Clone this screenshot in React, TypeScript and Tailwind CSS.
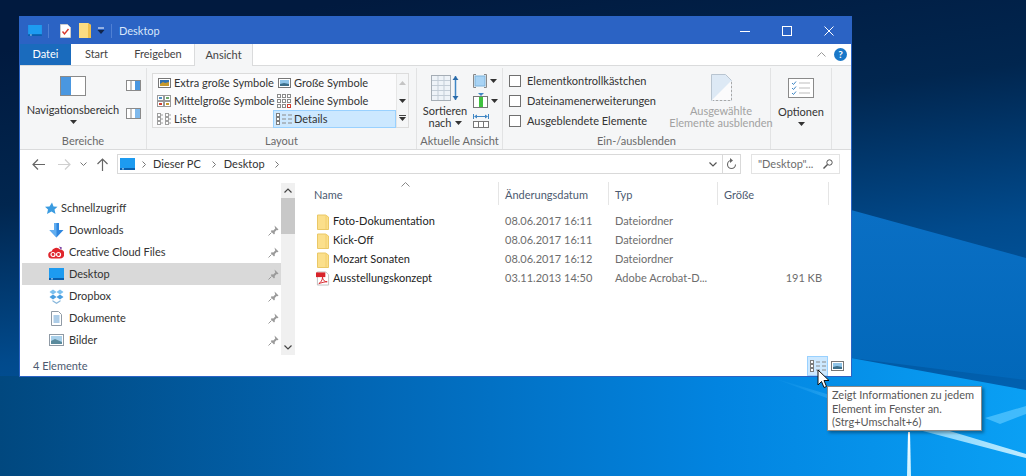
import React from 'react';

const Caret = ({ className = '' }: { className?: string }) => (
  <svg width="7" height="4" viewBox="0 0 7 4" className={className}><path d="M0 0h7L3.5 4z" fill="#333" /></svg>
);

const DesktopIcon = ({ w = 15, h = 12 }: { w?: number; h?: number }) => (
  <svg width={w} height={h} viewBox="0 0 15 12">
    <rect x="0" y="0" width="15" height="11" fill="#1d9bf0" />
    <rect x="0" y="10" width="15" height="2" fill="#0a5fae" />
    <rect x="2" y="10.4" width="2" height="1" fill="#bfe3fb" />
  </svg>
);

const Folder = () => (
  <svg width="12" height="16" viewBox="0 0 12 16">
    <path d="M0.5 1h8l3 2v12.5h-11z" fill="#fbdf8b" stroke="#eac867" />
    <path d="M9 1v14" stroke="#f2cf6f" strokeWidth="1" />
  </svg>
);

const PdfIcon = () => (
  <svg width="15" height="15" viewBox="0 0 15 15">
    <path d="M1.5 0.5h9l3 3v11h-12z" fill="#fff" stroke="#bdbdbd" />
    <rect x="0" y="1" width="10" height="5" fill="#d8232a" />
    <path d="M3 13c2-1 4-4 4-7 0 3 2 5 5 5-3 0-6 1-9 2z" fill="none" stroke="#d8232a" strokeWidth="1" />
  </svg>
);

const Pin = () => (
  <svg width="11" height="11" viewBox="0 0 11 11">
    <path d="M6.5 0.5l4 4-1 .7-.8-.3-2 2 .2 1.7-.9.8L2.8 6.2l.8-.9 1.7.2 2-2-.3-.8z" fill="#9a9a9a" />
    <path d="M3.5 7.5L0.5 10.5" stroke="#9a9a9a" />
  </svg>
);

const NavIcon = ({ name }: { name: string }) => {
  if (name === 'Downloads')
    return (
      <svg width="15" height="15" viewBox="0 0 15 15">
        <path d="M5 0h5v7h4.500L7.500 14.500 0.500 7H5z" fill="#2f86de" />
        <path d="M5 0h2.500v14.500L0.500 7H5z" fill="#62aef0" />
      </svg>
    );
  if (name === 'Creative Cloud Files')
    return (
      <svg width="16" height="13" viewBox="0 0 16 13">
        <path d="M4 12.500a3.500 3.500 0 0 1-.5-7A5 5 0 0 1 12 3.500a4.500 4.500 0 0 1 0 9z" fill="#e0262c" />
        <circle cx="5" cy="8.500" r="2" fill="none" stroke="#fff" strokeWidth="1.200" />
        <circle cx="10.500" cy="8.500" r="2" fill="none" stroke="#fff" strokeWidth="1.200" />
        <path d="M11 0.500l3 1-1 2.500z" fill="#7a3fa0" />
      </svg>
    );
  if (name === 'Desktop') return <DesktopIcon />;
  if (name === 'Dropbox')
    return (
      <svg width="15" height="15" viewBox="0 0 15 15">
        <path d="M4 0.500l3.500 2.500L4 5.500 0.500 3zM11 0.500L14.500 3 11 5.500 7.500 3z" fill="#7cc0ee" />
        <path d="M4 5.500L7.500 8 4 10.500 0.500 8zM11 5.500L14.500 8 11 10.500 7.500 8z" fill="#4a9fe0" />
        <path d="M3.500 11l4 2.500 4-2.500v1.500l-4 2.500-4-2.500z" fill="#8ab8dc" />
      </svg>
    );
  if (name === 'Dokumente')
    return (
      <svg width="11" height="15" viewBox="0 0 11 15">
        <path d="M0.500 0.500h7l3 3v11h-10z" fill="#fff" stroke="#8f9aa5" />
        <path d="M2.500 5h6M2.500 7h6M2.500 9h6M2.500 11h6" stroke="#5b9ad0" />
      </svg>
    );
  return (
    <svg width="15" height="12" viewBox="0 0 15 12">
      <rect x="0.500" y="0.500" width="14" height="11" fill="#fff" stroke="#8f9aa5" />
      <rect x="2" y="2" width="11" height="8" fill="#a9d0ea" />
      <path d="M2 10V7l4-2 7 3v2z" fill="#5a8a9c" />
    </svg>
  );
};

const GalleryIcon = ({ kind }: { kind: string }) => {
  if (kind === 'xl')
    return (
      <svg width="13" height="10" viewBox="0 0 13 10">
        <rect x="0.500" y="0.500" width="12" height="9" fill="#fff" stroke="#777" />
        <rect x="2" y="2" width="9" height="6" fill="#2f6fb0" />
        <path d="M2 8V6l3-2 2 1 4-1v4z" fill="#c79a2c" />
      </svg>
    );
  if (kind === 'l')
    return (
      <svg width="13" height="10" viewBox="0 0 13 10">
        <rect x="0.500" y="0.500" width="12" height="9" fill="#fff" stroke="#777" />
        <rect x="2" y="2" width="9" height="6" fill="#8fc4e8" />
        <path d="M2 8V6l4-1 5 1v2z" fill="#3d6f8a" />
      </svg>
    );
  if (kind === 'm')
    return (
      <svg width="14" height="12" viewBox="0 0 14 12">
        <rect x="0.500" y="0.500" width="6" height="5" fill="#fff" stroke="#999" />
        <rect x="7.500" y="0.500" width="6" height="5" fill="#fff" stroke="#999" />
        <rect x="0.500" y="6.500" width="6" height="5" fill="#fff" stroke="#999" />
        <rect x="7.500" y="6.500" width="6" height="5" fill="#fff" stroke="#999" />
        <rect x="2" y="2" width="3" height="2" fill="#4d8ec4" />
        <rect x="9" y="2" width="3" height="2" fill="#6fa86a" />
        <rect x="2" y="8" width="3" height="2" fill="#d04030" />
        <rect x="9" y="8" width="3" height="2" fill="#c79a2c" />
      </svg>
    );
  if (kind === 's')
    return (
      <svg width="14" height="14" viewBox="0 0 14 14">
        {[0, 5, 10].flatMap((y) =>
          [0, 5, 10].map((x) => (
            <rect key={`${x}-${y}`} x={x + 0.5} y={y + 0.5} width="3" height="3" fill="#fff" stroke={y === 10 && x === 10 ? '#d04030' : '#8a8a8a'} />
          )),
        )}
      </svg>
    );
  if (kind === 'list')
    return (
      <svg width="14" height="12" viewBox="0 0 14 12">
        {[0, 4, 8].flatMap((y) =>
          [0, 8].map((x) => (
            <g key={`${x}-${y}`}>
              <rect x={x + 0.5} y={y + 0.5} width="3" height="3" fill="#fff" stroke="#a0a0a0" />
              <path d={`M${x + 4} ${y + 2}h2`} stroke="#a0a0a0" />
            </g>
          )),
        )}
      </svg>
    );
  return <DetailsIcon />;
};

const DetailsIcon = () => (
  <svg width="16" height="12" viewBox="0 0 16 12">
    {[0, 4, 8].map((y) => (
      <g key={y}>
        <rect x="0.500" y={y + 0.5} width="3" height="3" fill="#fff" stroke="#7d7d7d" />
        <path d={`M6 ${y + 2}h4M12 ${y + 2}h4`} stroke="#8a8a8a" />
      </g>
    ))}
  </svg>
);

const PaneIcon = ({ side }: { side: 'left' | 'right' | 'rightDark' }) => (
  <svg width="15" height="11" viewBox="0 0 15 11">
    <rect x="0.500" y="0.500" width="14" height="10" fill="#fff" stroke="#8a8a8a" />
    {side === 'left' && <rect x="1" y="1" width="6" height="9" fill="#4a97e0" />}
    {side === 'right' && <rect x="9" y="1" width="5" height="9" fill="#4a97e0" />}
    {side === 'rightDark' && <rect x="9" y="1" width="5" height="9" fill="#7fb9ec" />}
    <path d="M5 1v9" stroke="#8a8a8a" />
  </svg>
);

const RibbonGroup = ({ label, className, children }: { label: string; className: string; children: React.ReactNode }) => (
  <div className={`flex flex-col border-r border-[#e2e3e4] ${className}`}>
    <div className="flex-1 min-h-0 flex">{children}</div>
    <div className="h-[15px] mb-[1px] leading-[15px] text-center text-[#6a6a6a] whitespace-nowrap">{label}</div>
  </div>
);

const GalleryItem = ({ kind, label, active }: { kind: string; label: string; active?: boolean }) => (
  <div className={`h-[18px] flex items-center border ${active ? 'bg-[#cce8ff] border-[#99d1ff]' : 'border-transparent'}`}>
    <span className="w-[20px] flex justify-center shrink-0"><GalleryIcon kind={kind} /></span>
    <span className="whitespace-nowrap text-[#333]">{label}</span>
  </div>
);

const Check = ({ label }: { label: string }) => (
  <div className="h-[20px] flex items-center gap-[6px]">
    <span className="w-[12px] h-[12px] border border-[#707070] bg-white shrink-0" />
    <span className="whitespace-nowrap text-[#333]">{label}</span>
  </div>
);

const navItems = ['Downloads', 'Creative Cloud Files', 'Desktop', 'Dropbox', 'Dokumente', 'Bilder'];

const files = [
  { name: 'Foto-Dokumentation', date: '08.06.2017 16:11', type: 'Dateiordner', size: '' },
  { name: 'Kick-Off', date: '08.06.2017 16:11', type: 'Dateiordner', size: '' },
  { name: 'Mozart Sonaten', date: '08.06.2017 16:12', type: 'Dateiordner', size: '' },
  { name: 'Ausstellungskonzept', date: '03.11.2013 14:50', type: 'Adobe Acrobat-D...', size: '191 KB' },
];

const columns = ['Name', 'Änderungsdatum', 'Typ', 'Größe'];

export default function App() {
  return (
    <div className="relative w-[1026px] h-[476px] overflow-hidden pt-[16px] pl-[19px] text-[11px] font-['Lato',sans-serif] bg-[#012a5c]">
      {/* Wallpaper */}
      <svg className="absolute inset-0" width="1026" height="476" viewBox="0 0 1026 476">
        <defs>
          <linearGradient id="sky" x1="0.350" y1="0" x2="0.650" y2="1">
            <stop offset="0" stopColor="#011a3f" />
            <stop offset="0.300" stopColor="#01264f" />
            <stop offset="0.600" stopColor="#014a8c" />
            <stop offset="1" stopColor="#0166b8" />
          </linearGradient>
          <linearGradient id="floor" x1="0" y1="0" x2="1" y2="0">
            <stop offset="0" stopColor="#01487f" />
            <stop offset="0.350" stopColor="#0266b4" />
            <stop offset="0.700" stopColor="#0284e0" />
            <stop offset="1" stopColor="#0aa0f4" />
          </linearGradient>
          <linearGradient id="band" x1="0" y1="0" x2="0" y2="1">
            <stop offset="0" stopColor="#0a6fc4" />
            <stop offset="1" stopColor="#0268ba" />
          </linearGradient>
          <linearGradient id="streak" x1="0" y1="0" x2="1" y2="0">
            <stop offset="0" stopColor="#4cc0ff" stopOpacity="0" />
            <stop offset="0.700" stopColor="#9fe0ff" stopOpacity="0.900" />
            <stop offset="1" stopColor="#c0ecff" />
          </linearGradient>
          <linearGradient id="beam" x1="0" y1="0" x2="0" y2="1">
            <stop offset="0" stopColor="#ffffff" />
            <stop offset="1" stopColor="#c8f0ff" />
          </linearGradient>
        </defs>
        <rect width="1026" height="476" fill="url(#sky)" />
        <path d="M851 210L1026 258V380L851 358z" fill="url(#band)" />
        <path d="M0 476V376H851V358L1026 390V476z" fill="url(#floor)" />
        <path d="M770 377L1026 454V458L900 425z" fill="url(#streak)" />
        <path d="M985 418L1026 406V414L1000 424z" fill="#5ac8ff" opacity="0.700" />
        <path d="M907 476L908 432L910 432L911 476z" fill="url(#beam)" />
      </svg>

      {/* Window */}
      <div className="relative w-[833px] h-[361px] flex flex-col border border-[#2b63c4] bg-white">
        {/* Title bar */}
        <div className="h-[27px] shrink-0 bg-[#2b63c4] flex items-center text-[#d8e6fa]">
          <span className="ml-[8px] flex"><DesktopIcon w={14} h={11} /></span>
          <span className="ml-[6px] w-[1px] h-[14px] bg-[#4f80d4]" />
          <svg className="ml-[11px]" width="11" height="14" viewBox="0 0 11 14">
            <path d="M0.500 0.500h7l3 3v10h-10z" fill="#fff" stroke="#ccc" />
            <path d="M2.500 7.500l2 2.500 4-5" fill="none" stroke="#d8352a" strokeWidth="1.400" />
          </svg>
          <svg className="ml-[8px]" width="12" height="15" viewBox="0 0 12 15">
            <path d="M0 0h9l3 2v13H0z" fill="#fbdc82" />
            <path d="M9 0v15h3V2z" fill="#eebf4e" />
          </svg>
          <svg className="ml-[6px]" width="8" height="8" viewBox="0 0 8 8">
            <path d="M1 1h6" stroke="#fff" />
            <path d="M0.500 3h7L4 7z" fill="#10244a" />
          </svg>
          <span className="ml-[6px] w-[1px] h-[14px] bg-[#4f80d4]" />
          <span className="ml-[7px] text-[11px] leading-none">Desktop</span>
          <div className="ml-auto flex items-center pr-[1px]">
            {/* minimize */}
            <span className="w-[42px] flex justify-center">
              <svg width="10" height="10" viewBox="0 0 10 10"><path d="M0 5.500h10" stroke="#fff" /></svg>
            </span>
            <span className="w-[42px] flex justify-center">
              <svg width="10" height="10" viewBox="0 0 10 10"><rect x="0.500" y="0.500" width="9" height="9" fill="none" stroke="#fff" /></svg>
            </span>
            <span className="w-[42px] flex justify-center">
              <svg width="10" height="10" viewBox="0 0 10 10"><path d="M0.500 0.500l9 9M9.500 0.500l-9 9" stroke="#fff" /></svg>
            </span>
          </div>
        </div>

        {/* Tabs */}
        <div className="h-[22px] shrink-0 flex items-stretch border-b border-[#dadbdc] text-[#444]">
          <div className="w-[51px] bg-[#1a6bbd] text-white flex items-center justify-center">Datei</div>
          <div className="w-[51px] flex items-center justify-center">Start</div>
          <div className="w-[72px] flex items-center justify-center">Freigeben</div>
          <div className="w-[59px] -mb-[1px] z-10 bg-[#f5f6f7] border-x border-[#dadbdc] flex items-center justify-center">Ansicht</div>
          <div className="ml-auto flex items-center gap-[8px] pr-[4px]">
            <svg width="9" height="5" viewBox="0 0 9 5"><path d="M0.500 4.500l4-4 4 4" fill="none" stroke="#9a9a9a" /></svg>
            <span className="w-[13px] h-[13px] rounded-full bg-[#1a78c8] text-white text-[10px] font-bold leading-[13px] text-center">?</span>
          </div>
        </div>

        {/* Ribbon */}
        <div className="h-[84px] shrink-0 flex bg-[#f5f6f7] border-b border-[#dadbdc] pt-[2px] text-[#444]">
          <RibbonGroup label="Bereiche" className="w-[127px]">
            <div className="w-[106px] flex flex-col items-center pt-[8px]">
              <svg width="26" height="20" viewBox="0 0 26 20">
                <rect x="0.500" y="0.500" width="25" height="19" fill="#fff" stroke="#8a8a8a" />
                <rect x="1" y="1" width="10" height="18" fill="#4a97e0" />
              </svg>
              <span className="mt-[7px] leading-[14px] text-[#333] whitespace-nowrap">Navigationsbereich</span>
              <Caret className="mt-[3px]" />
            </div>
            <div className="flex flex-col pt-[12px] gap-[17px]">
              <PaneIcon side="right" />
              <PaneIcon side="rightDark" />
            </div>
          </RibbonGroup>

          <RibbonGroup label="Layout" className="w-[270px]">
            <div className="ml-[5px] mt-[5px] w-[257px] h-[55px] flex border border-[#dcdcdc] bg-[#fbfbfc]">
              <div className="w-[243px] grid grid-cols-[120px_123px] pt-[0px]">
                <GalleryItem kind="xl" label="Extra große Symbole" />
                <GalleryItem kind="l" label="Große Symbole" />
                <GalleryItem kind="m" label="Mittelgroße Symbole" />
                <GalleryItem kind="s" label="Kleine Symbole" />
                <GalleryItem kind="list" label="Liste" />
                <GalleryItem kind="details" label="Details" active />
              </div>
              <div className="flex-1 flex flex-col items-center bg-[#f5f6f7] border-l border-[#e6e6e6]">
                <span className="h-[18px] flex items-center"><svg width="7" height="4" viewBox="0 0 7 4"><path d="M0 4h7L3.500 0z" fill="#c4c4c4" /></svg></span>
                <span className="h-[18px] flex items-center"><Caret /></span>
                <span className="h-[18px] flex flex-col items-center justify-center gap-[1px]">
                  <span className="w-[7px] h-[1px] bg-[#444]" />
                  <Caret />
                </span>
              </div>
            </div>
          </RibbonGroup>

          <RibbonGroup label="Aktuelle Ansicht" className="w-[86px]">
            <div className="w-[56px] flex flex-col items-center pt-[7px] shrink-0">
              <svg width="28" height="26" viewBox="0 0 28 26">
                <rect x="0.500" y="0.500" width="19" height="25" fill="#eef3f8" stroke="#a5adb5" />
                <path d="M1 5.500h18M1 10.500h18M1 15.500h18M1 20.500h18M7 1v24M13 1v24" stroke="#c3cdd7" />
                <path d="M24.500 1v24" stroke="#3f86c4" strokeWidth="1.500" />
                <path d="M21.500 5l3-4 3 4zM21.500 21l3 4 3-4z" fill="#2a6aa8" />
              </svg>
              <span className="mt-[3px] leading-[13px] text-[#333] text-center">Sortieren</span>
              <span className="leading-[12px] text-[#333] flex items-center gap-[3px]">nach <Caret /></span>
            </div>
            <div className="flex flex-col pt-[6px] gap-[5px]">
              <div className="flex items-center gap-[3px]">
                <svg width="14" height="14" viewBox="0 0 14 14">
                  <path d="M3 0.500H0.500v13H3M11 0.500h2.500v13H11" fill="none" stroke="#888" />
                  <rect x="2" y="2" width="10" height="10" fill="#a9d4f5" stroke="#7fb4dc" />
                </svg>
                <Caret />
              </div>
              <div className="flex items-center gap-[3px]">
                <svg width="15" height="15" viewBox="0 0 15 15">
                  <rect x="0.500" y="3.500" width="14" height="11" fill="#fff" stroke="#777" />
                  <rect x="6" y="4" width="4" height="10" fill="#3fc13f" />
                  <path d="M5 0l3 3 3-3z" fill="#3f86c4" />
                </svg>
                <Caret />
              </div>
              <svg className="mt-[1px]" width="16" height="14" viewBox="0 0 16 14">
                <path d="M0.500 0v5M15.500 0v5M2 2.500h12" stroke="#3f86c4" />
                <path d="M1 2.500l3-2v4zM15 2.500l-3-2v4z" fill="#3f86c4" />
                <rect x="0.500" y="7.500" width="15" height="6" fill="#fff" stroke="#777" />
                <path d="M5.500 8v5M10.500 8v5" stroke="#777" />
              </svg>
            </div>
          </RibbonGroup>

          <RibbonGroup label="Ein-/ausblenden" className="w-[268px]">
            <div className="pl-[6px] pt-[3px] w-[176px] flex flex-col shrink-0">
              <Check label="Elementkontrollkästchen" />
              <Check label="Dateinamenerweiterungen" />
              <Check label="Ausgeblendete Elemente" />
            </div>
            <div className="w-[84px] flex flex-col items-center pt-[6px] text-[#a2a2a2]">
              <svg width="21" height="27" viewBox="0 0 21 27">
                <path d="M0.500 0.500h14l6 6v20h-20z" fill="#dde9f5" stroke="#b8c4d0" />
                <path d="M0.500 26.500L20.500 6.500V26.500z" fill="#fbfbfc" />
                <path d="M20.500 8v18.500H2" fill="none" stroke="#a8a8a8" strokeDasharray="2 2" />
              </svg>
              <span className="mt-[3px] leading-[13px] whitespace-nowrap">Ausgewählte</span>
              <span className="leading-[12px] whitespace-nowrap">Elemente ausblenden</span>
            </div>
          </RibbonGroup>

          <div className="w-[61px] border-r border-[#e2e3e4] flex flex-col items-center pt-[10px]">
            <svg width="26" height="20" viewBox="0 0 26 20">
              <rect x="0.500" y="0.500" width="25" height="19" fill="#fff" stroke="#8a8a8a" />
              <path d="M4 5l1.500 1.500L8 3.500M4 10l1.500 1.500L8 8.500M4 15l1.500 1.500L8 13.500" fill="none" stroke="#3f86c4" />
              <path d="M11 5h11M11 10h11M11 15h11" stroke="#bdbdbd" />
            </svg>
            <span className="mt-[7px] leading-[14px] text-[#333]">Optionen</span>
            <Caret className="mt-[3px]" />
          </div>
        </div>

        {/* Address bar */}
        <div className="h-[28px] shrink-0 flex items-center text-[#333]">
          <div className="w-[97px] flex items-center pl-[12px] shrink-0">
            <svg width="13" height="11" viewBox="0 0 13 11"><path d="M6 0.500L1 5.500l5 5M1 5.500h12" fill="none" stroke="#666" strokeWidth="1.200" /></svg>
            <svg className="ml-[13px]" width="13" height="11" viewBox="0 0 13 11"><path d="M7 0.500l5 5-5 5M12 5.500H0" fill="none" stroke="#cfcfcf" strokeWidth="1.200" /></svg>
            <svg className="ml-[9px]" width="7" height="5" viewBox="0 0 7 5"><path d="M0.500 0.500l3 3 3-3" fill="none" stroke="#777" /></svg>
            <svg className="ml-[10px]" width="11" height="13" viewBox="0 0 11 13"><path d="M0.500 6l5-5 5 5M5.500 1v12" fill="none" stroke="#666" strokeWidth="1.200" /></svg>
          </div>
          <div className="w-[624px] h-[20px] flex items-center border border-[#d9d9d9] shrink-0">
            <span className="ml-[2px] flex"><DesktopIcon /></span>
            <svg className="ml-[7px]" width="4" height="7" viewBox="0 0 4 7"><path d="M0.500 0.500l3 3-3 3" fill="none" stroke="#777" /></svg>
            <span className="ml-[7px]">Dieser PC</span>
            <svg className="ml-[11px]" width="4" height="7" viewBox="0 0 4 7"><path d="M0.500 0.500l3 3-3 3" fill="none" stroke="#777" /></svg>
            <span className="ml-[8px]">Desktop</span>
            <svg className="ml-[10px]" width="4" height="7" viewBox="0 0 4 7"><path d="M0.500 0.500l3 3-3 3" fill="none" stroke="#777" /></svg>
            <svg className="ml-auto mr-[5px]" width="8" height="5" viewBox="0 0 8 5"><path d="M0.500 0.500l3.500 3.500 3.500-3.500" fill="none" stroke="#555" strokeWidth="1.200" /></svg>
            <span className="w-[18px] h-full border-l border-[#d9d9d9] flex items-center justify-center">
              <svg width="11" height="12" viewBox="0 0 11 12"><path d="M5.500 2.500a4 4 0 1 0 4 4" fill="none" stroke="#666" strokeWidth="1.100" /><path d="M4 0l3 2.500L4 5z" fill="#666" /></svg>
            </span>
          </div>
          <div className="ml-[10px] w-[89px] h-[20px] flex items-center justify-between px-[6px] border border-[#e3e3e3] text-[#6d6d6d]">
            <span className="whitespace-nowrap">"Desktop"...</span>
            <svg width="10" height="10" viewBox="0 0 10 10"><circle cx="6.500" cy="3.500" r="2.700" fill="none" stroke="#555" /><path d="M4.500 5.500L0.500 9.500" stroke="#555" strokeWidth="1.400" /></svg>
          </div>
        </div>

        {/* Content */}
        <div className="flex-1 min-h-0 flex">
          {/* Navigation pane */}
          <div className="w-[276px] shrink-0 flex pl-[2px]">
            <div className="w-[259px] pt-[19px] shrink-0 text-[#333] overflow-hidden">
              <div className="h-[22px] flex items-center pl-[23px]">
                <svg width="13" height="13" viewBox="0 0 13 13" className="mr-[3px]">
                  <path d="M7 0.500l1.500 4 4 .3-3 2.700 1 4.500L6.500 9.500 2 12l1-4.500-3-2.700 4.500-.3z" fill="#3a9be0" />
                </svg>
                Schnellzugriff
              </div>
              {navItems.map((item) => (
                <div key={item} className={`h-[22px] flex items-center ${item === 'Desktop' ? 'bg-[#d9d9d9]' : ''}`}>
                  <span className="ml-[25px] w-[18px] flex justify-center shrink-0"><NavIcon name={item} /></span>
                  <span className="ml-[4px] whitespace-nowrap">{item}</span>
                  <span className="ml-auto mr-[2px] flex"><Pin /></span>
                </div>
              ))}
            </div>
            <div className="w-[14px] mt-[5px] bg-[#f0f0f0] flex flex-col items-center">
              <span className="h-[15px] flex items-center"><svg width="8" height="5" viewBox="0 0 8 5"><path d="M0.500 4.500L4 1l3.500 3.500" fill="none" stroke="#444" strokeWidth="1.200" /></svg></span>
              <span className="w-full h-[36px] bg-[#c8c8c8]" />
              <span className="mt-auto h-[15px] flex items-center"><svg width="8" height="5" viewBox="0 0 8 5"><path d="M0.500 0.500L4 4l3.500-3.500" fill="none" stroke="#444" strokeWidth="1.200" /></svg></span>
            </div>
          </div>

          {/* File list */}
          <div className="flex-1 relative pl-[8px] pt-[4px]">
            <svg className="absolute left-[105px] top-[4px]" width="9" height="5" viewBox="0 0 9 5"><path d="M0.500 4.500l4-4 4 4" fill="none" stroke="#888" /></svg>
            <div className="grid grid-cols-[195px_110px_109px_111px] h-[23px] text-[#4c5a70]">
              {columns.map((col) => (
                <div key={col} className="flex items-center pl-[6px] pt-[3px] border-r border-[#e5e5e5] first:pl-[10px]">{col}</div>
              ))}
            </div>
            <div className="mt-[7px]">
              {files.map((file) => (
                <div key={file.name} className="grid grid-cols-[195px_110px_109px_111px] h-[19px] items-center text-[#6d6d6d]">
                  <div className="flex items-center text-[#222]">
                    <span className="ml-[12px] w-[14px] flex justify-center">{file.size ? <PdfIcon /> : <Folder />}</span>
                    <span className="ml-[3px] whitespace-nowrap">{file.name}</span>
                  </div>
                  <div className="pl-[6px] whitespace-nowrap">{file.date}</div>
                  <div className="pl-[6px] whitespace-nowrap">{file.type}</div>
                  <div className="pr-[7px] text-right">{file.size}</div>
                </div>
              ))}
            </div>
          </div>
        </div>

        {/* Status bar */}
        <div className="h-[21px] shrink-0 flex items-center pl-[13px] pr-[7px] pt-[1px] text-[#4c5a70]">
          <span>4 Elemente</span>
          <div className="ml-auto flex items-center gap-[2px] h-full">
            <span className="w-[21px] h-full bg-[#cce8ff] border border-[#99d1ff] flex items-center justify-center"><DetailsIcon /></span>
            <span className="w-[14px] flex justify-center">
              <svg width="13" height="10" viewBox="0 0 13 10">
                <rect x="0.500" y="0.500" width="12" height="9" fill="#fff" stroke="#777" />
                <rect x="2" y="2" width="9" height="6" fill="#8fc4e8" />
                <path d="M2 8V6l4-1 5 1v2z" fill="#3d6f8a" />
              </svg>
            </span>
          </div>
        </div>
      </div>

      {/* Cursor */}
      <svg className="absolute left-[817px] top-[369px] z-20" width="13" height="20" viewBox="0 0 13 20">
        <path d="M1 1v15l3.500-3.500 2.500 6 2.500-1-2.500-6h5z" fill="#fff" stroke="#111" strokeWidth="1" />
      </svg>

      {/* Tooltip */}
      <div className="absolute left-[827px] top-[386px] w-[155px] h-[45px] z-10 bg-white border border-[#8a8a8a] shadow-[2px_2px_3px_rgba(0,0,0,0.35)] pl-[4px] pt-[1px] text-[#575757] leading-[13.500px] whitespace-nowrap">
        <div>Zeigt Informationen zu jedem</div>
        <div>Element im Fenster an.</div>
        <div>(Strg+Umschalt+6)</div>
      </div>
    </div>
  );
}
